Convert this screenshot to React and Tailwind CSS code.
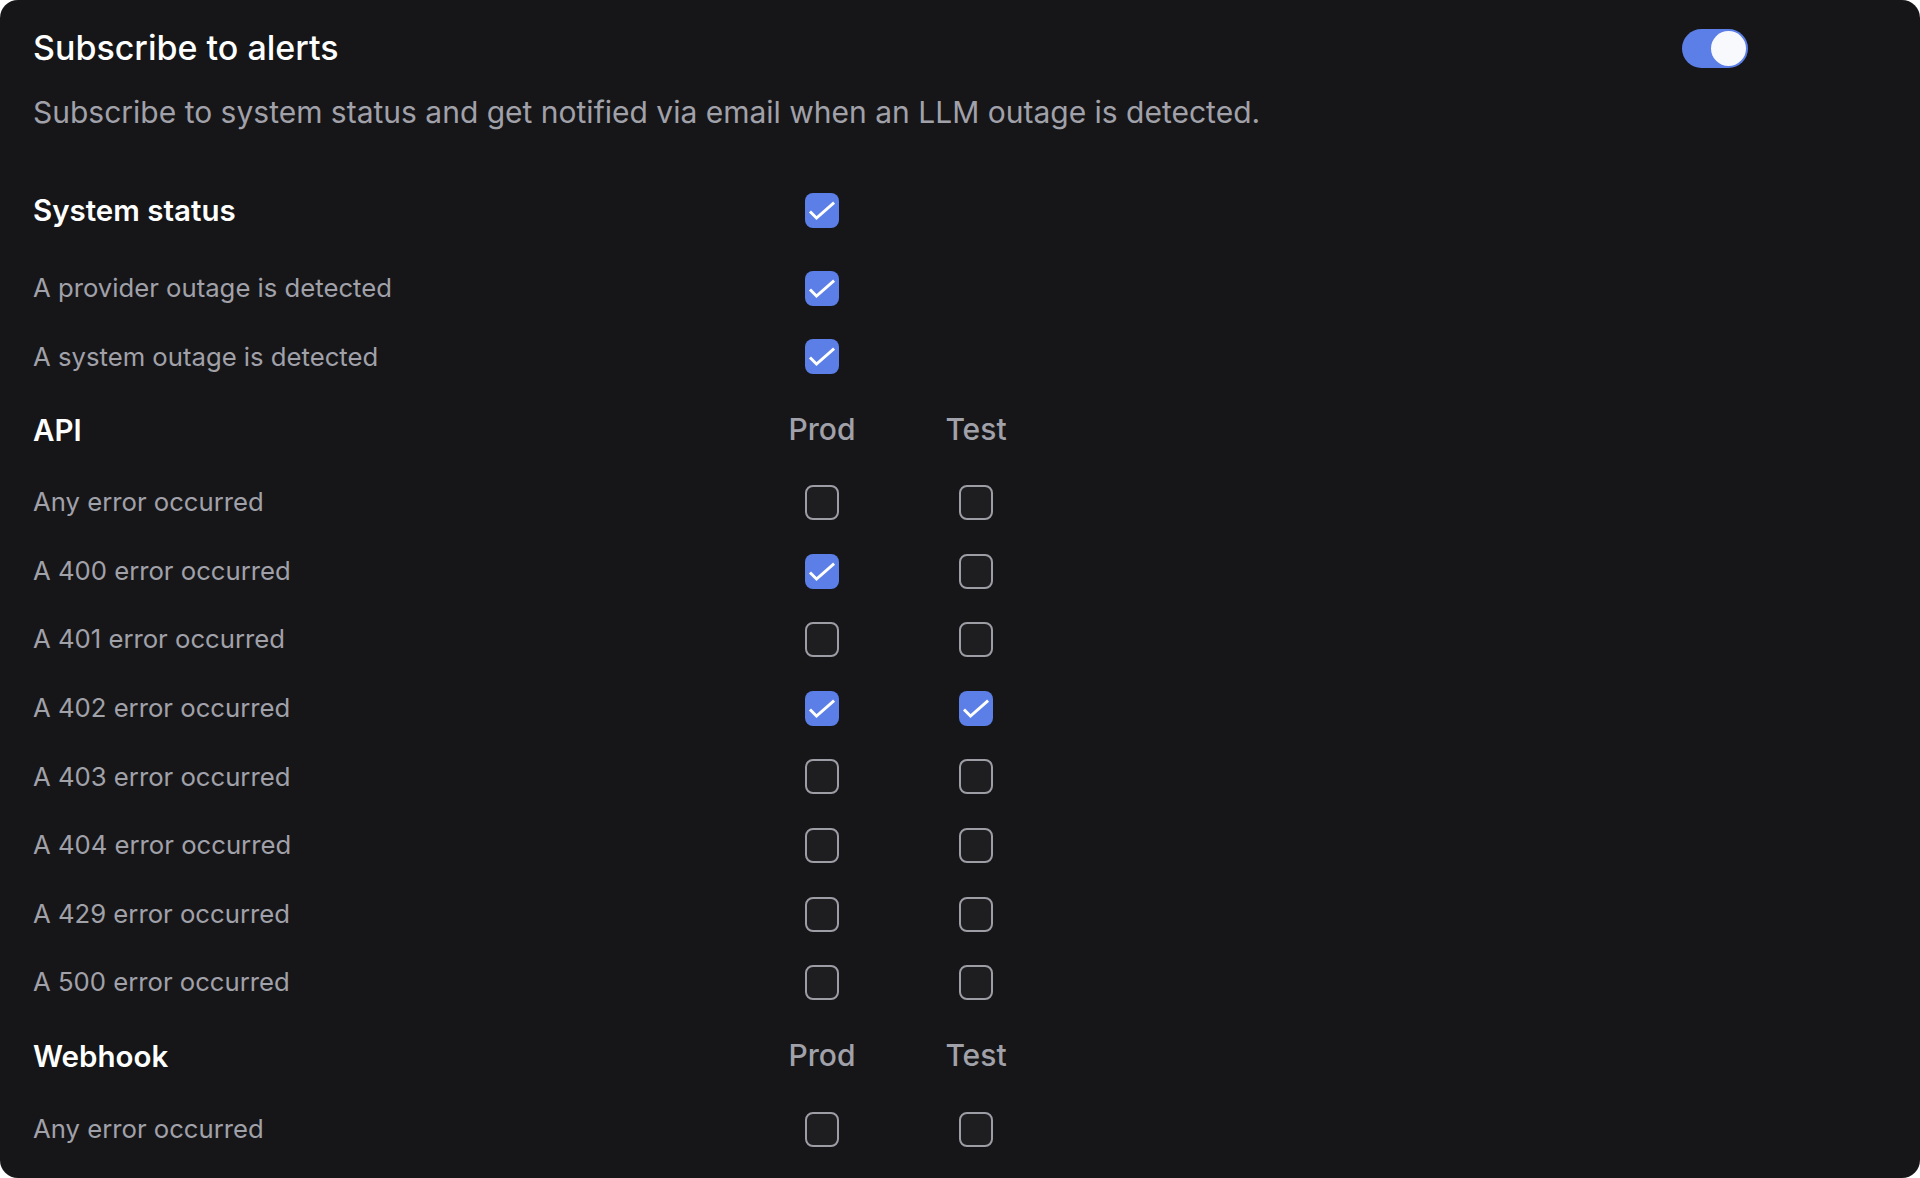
import { useState } from 'react';

const font = { fontFamily: 'Inter, "Noto Sans", sans-serif' };

// 체크박스
const Box = ({ on }) => (
  <div
    className={`w-[34px] h-[35px] rounded-[8px] flex items-center justify-center ${
      on ? 'bg-[#5b7fe6]' : 'bg-[#1e1e21] border-2 border-[#9d9da5]'
    }`}
  >
    {on && (
      <svg width="34" height="35" viewBox="0 0 34 35" fill="none">
        <polyline points="6,19.5 11.5,25 28,10.5" stroke="white" strokeWidth="2.9" strokeLinecap="square" />
      </svg>
    )}
  </div>
);

const Cell = ({ children }) => <div className="w-[154px] flex justify-center">{children}</div>;

const Row = ({ label, prod, test, showTest = true }) => (
  <div className="h-[68.6px] flex items-center">
    <div className="w-[712px] text-[25.7px] text-[#a1a1aa]">{label}</div>
    <Cell><Box on={prod} /></Cell>
    {showTest && <Cell><Box on={test} /></Cell>}
  </div>
);

const Head = ({ title, h, cols }) => (
  <div className={`flex items-center ${h}`}>
    <div className="w-[712px] text-[29.5px] font-semibold text-white">{title}</div>
    {cols && (
      <>
        <Cell><span className="text-[30px] font-medium text-[#a1a1aa]">Prod</span></Cell>
        <Cell><span className="text-[30px] font-medium text-[#a1a1aa]">Test</span></Cell>
      </>
    )}
  </div>
);

const api = [
  ['Any error occurred', false, false],
  ['A 400 error occurred', true, false],
  ['A 401 error occurred', false, false],
  ['A 402 error occurred', true, true],
  ['A 403 error occurred', false, false],
  ['A 404 error occurred', false, false],
  ['A 429 error occurred', false, false],
  ['A 500 error occurred', false, false],
];

export default function App() {
  const [enabled, setEnabled] = useState(true);

  return (
    <div className="bg-white min-h-screen" style={font}>
      <div className="w-full h-[1178px] bg-[#161618] rounded-[18px] overflow-hidden pl-[33px] pt-[28px]">
        <div className="w-[1715px] h-[40px] flex items-center justify-between">
          <h1 className="text-[34px] font-medium text-white leading-[40px]">Subscribe to alerts</h1>
          <button
            onClick={() => setEnabled(!enabled)}
            className="w-[66px] h-[39px] rounded-full bg-[#5b7fe6] flex items-center px-[2px] justify-end"
          >
            <span className="w-[35px] h-[35px] rounded-full bg-[#f8f9fc]" />
          </button>
        </div>
        <p className="mt-[26px] text-[30px] leading-[36px] text-[#a1a1aa]">
          Subscribe to system status and get notified via email when an LLM outage is detected.
        </p>

        <div className="mt-[43px]">
          <div className="flex items-center h-[74px]">
            <div className="w-[712px] text-[29.5px] font-semibold text-white">System status</div>
            <Cell><Box on /></Cell>
          </div>
          <div className="mt-[7px]">
            <Row label="A provider outage is detected" prod showTest={false} />
            <Row label="A system outage is detected" prod showTest={false} />
          </div>
        </div>

        <Head title="API" h="h-[77px]" cols />
        {api.map(([label, p, t]) => (
          <Row key={label} label={label} prod={p} test={t} />
        ))}

        <Head title="Webhook" h="h-[78px]" cols />
        <Row label="Any error occurred" prod={false} test={false} />
      </div>
    </div>
  );
}
